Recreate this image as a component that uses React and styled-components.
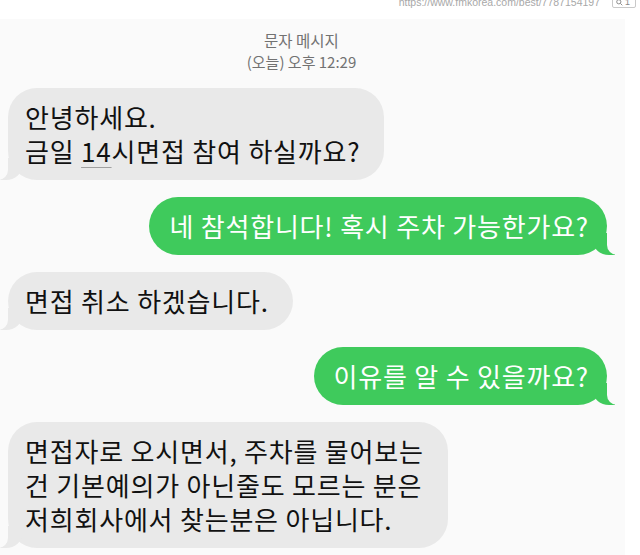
import React from "react";
import styled, { createGlobalStyle } from "styled-components";

const SCREEN_BG = "#fafafa";
const GRAY = "#e9e9e9";
const GREEN = "#3fca5c";

const GlobalStyle = createGlobalStyle`
  html, body {
    margin: 0;
    padding: 0;
    background: #ffffff;
  }
  body {
    width: 640px;
    height: 555px;
    overflow: hidden;
    font-family: "Noto Sans CJK KR", "Noto Sans", sans-serif;
  }
`;

const Page = styled.div`
  width: 640px;
  height: 555px;
  display: flex;
  flex-direction: column;
  overflow: hidden;
`;

const SourceBar = styled.div`
  height: 19px;
  flex-shrink: 0;
  display: flex;
  justify-content: flex-end;
  align-items: flex-start;
  gap: 12px;
  padding-right: 4px;
  overflow: hidden;
`;

const SourceUrl = styled.span`
  font: 10.5px/11px "Liberation Sans", Arial, sans-serif;
  color: #a8a8a8;
  margin-top: -3px;
`;

const ZoomBadge = styled.span`
  display: flex;
  align-items: center;
  gap: 2px;
  width: 24px;
  height: 12px;
  margin-top: -4px;
  padding: 0 3px;
  box-sizing: border-box;
  border: 1px solid #c9c9c9;
  border-radius: 2px;
  font: 9px/1 "Liberation Sans", Arial, sans-serif;
  color: #8a8a8a;
`;

const Screen = styled.div`
  width: 625px;
  flex: 1;
  background: ${SCREEN_BG};
  padding-top: 10px;
  display: flex;
  flex-direction: column;
`;

const Header = styled.div`
  text-align: center;
  color: #727272;
  padding-right: 22px;
`;

const HeaderTitle = styled.div`
  font-size: 15.5px;
  line-height: 22px;
`;

const HeaderTime = styled.div`
  font-size: 15px;
  line-height: 22px;
`;

const Thread = styled.div`
  display: flex;
  flex-direction: column;
  gap: 17px;
  padding: 15px 18px 0 8px;
`;

const Bubble = styled.div`
  position: relative;
  z-index: 0;
  align-self: ${(p) => (p.$sent ? "flex-end" : "flex-start")};
  background: ${(p) => (p.$sent ? GREEN : GRAY)};
  color: ${(p) => (p.$sent ? "#ffffff" : "#111111")};
  font-size: 26px;
  letter-spacing: 0.8px;
  line-height: 34px;
  padding: ${(p) => (p.$sent ? "12px 18px 12px 20px" : "12px 24px 12px 17px")};
  border-radius: 29px;
  white-space: nowrap;

  &::before {
    content: "";
    position: absolute;
    z-index: -1;
    bottom: 0;
    ${(p) => (p.$sent ? "right: -8px;" : "left: -8px;")}
    width: 22px;
    height: 22px;
    background: ${(p) => (p.$sent ? GREEN : GRAY)};
    ${(p) =>
      p.$sent
        ? "border-bottom-left-radius: 16px 14px;"
        : "border-bottom-right-radius: 16px 14px;"}
  }

  &::after {
    content: "";
    position: absolute;
    z-index: -1;
    bottom: 0;
    ${(p) => (p.$sent ? "right: -18px;" : "left: -28px;")}
    width: ${(p) => (p.$sent ? "18px" : "28px")};
    height: 22px;
    background: ${SCREEN_BG};
    ${(p) =>
      p.$sent
        ? "border-bottom-left-radius: 10px;"
        : "border-bottom-right-radius: 10px;"}
  }
`;

const Detected = styled.span`
  text-decoration: underline;
  text-decoration-color: #a0a0a0;
  text-decoration-thickness: 1px;
  text-underline-offset: 5px;
`;

function SearchIcon() {
  return (
    <svg width="7" height="7" viewBox="0 0 10 10" fill="none" stroke="#8a8a8a" strokeWidth="1.4">
      <circle cx="4" cy="4" r="3" />
      <path d="M6.3 6.3 L9 9" />
    </svg>
  );
}

const messages = [
  {
    sent: false,
    lines: [
      "안녕하세요.",
      <>
        금일 <Detected>14</Detected>시면접 참여 하실까요?
      </>,
    ],
  },
  { sent: true, lines: ["네 참석합니다! 혹시 주차 가능한가요?"] },
  { sent: false, lines: ["면접 취소 하겠습니다."] },
  { sent: true, lines: ["이유를 알 수 있을까요?"] },
  {
    sent: false,
    lines: [
      "면접자로 오시면서, 주차를 물어보는",
      "건 기본예의가 아닌줄도 모르는 분은",
      "저희회사에서 찾는분은 아닙니다.",
    ],
  },
];

export default function App() {
  return (
    <Page>
      <GlobalStyle />
      <SourceBar>
        <SourceUrl>https://www.fmkorea.com/best/7787154197</SourceUrl>
        <ZoomBadge>
          <SearchIcon />1
        </ZoomBadge>
      </SourceBar>
      <Screen>
        <Header>
          <HeaderTitle>문자 메시지</HeaderTitle>
          <HeaderTime>(오늘) 오후 12:29</HeaderTime>
        </Header>
        <Thread>
          {messages.map((m, i) => (
            <Bubble key={i} $sent={m.sent}>
              {m.lines.map((line, j) => (
                <div key={j}>{line}</div>
              ))}
            </Bubble>
          ))}
        </Thread>
      </Screen>
    </Page>
  );
}
